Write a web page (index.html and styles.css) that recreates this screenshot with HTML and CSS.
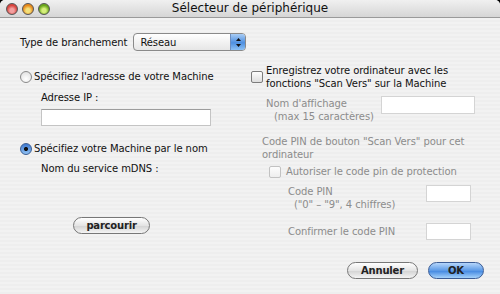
FILE: index.html
```html
<!DOCTYPE html>
<html lang="fr">
<head>
  <meta charset="UTF-8" />
  <title>Sélecteur de périphérique</title>
  <link rel="stylesheet" href="styles.css">
</head>

<body>
  <main class="window">
    <header class="titlebar">
      <div class="lights">
        <span class="light red"></span>
        <span class="light orange"></span>
        <span class="light green"></span>
      </div>
      <h1>Sélecteur de périphérique</h1>
    </header>

    <section class="content">
      <div class="type-row">
        <span>Type de branchement</span>
        <div class="popup">
          <span>Réseau</span>
          <span class="popup-arrows">
            <svg width="7" height="11" viewBox="0 0 7 11">
              <path d="M3.5 1 L6 4 L1 4 Z" fill="#111" />
              <path d="M3.5 10 L6 7 L1 7 Z" fill="#111" />
            </svg>
          </span>
        </div>
      </div>

      <div class="columns">
        <div class="left">
          <label class="option first">
            <span class="radio"></span>
            Spécifiez l'adresse de votre Machine
          </label>
          <div class="sub-label ip-label">Adresse IP :</div>
          <div class="field ip-field"></div>

          <label class="option second">
            <span class="radio checked"></span>
            Spécifiez votre Machine par le nom
          </label>
          <div class="sub-label mdns-label">Nom du service mDNS :</div>

          <button class="aqua browse">parcourir</button>
        </div>

        <div class="right">
          <label class="check-row register">
            <span class="checkbox"></span>
            <span>Enregistrez votre ordinateur avec les<br />fonctions "Scan Vers" sur la Machine</span>
          </label>

          <div class="field-row display-row">
            <span class="muted">Nom d'affichage<br /><span class="indent">(max 15 caractères)</span></span>
            <div class="field display-field"></div>
          </div>

          <p class="muted pin-note">Code PIN de bouton "Scan Vers" pour cet<br />ordinateur</p>

          <label class="check-row protect muted">
            <span class="checkbox disabled"></span>
            Autoriser le code pin de protection
          </label>

          <div class="field-row pin-row">
            <span class="muted">Code PIN<br /><span class="indent-small">("0" – "9", 4 chiffres)</span></span>
            <div class="field pin-field"></div>
          </div>

          <div class="field-row confirm-row">
            <span class="muted">Confirmer le code PIN</span>
            <div class="field pin-field"></div>
          </div>
        </div>
      </div>

      <div class="actions">
        <button class="aqua cancel">Annuler</button>
        <button class="aqua ok">OK</button>
      </div>
    </section>
  </main>
</body>
</html>
```

FILE: styles.css
```css
* {
  box-sizing: border-box;
}

body {
  margin: 0;
  background: #000;
  font-family: "DejaVu Sans", sans-serif;
  font-size: 10px;
  letter-spacing: -0.08px;
  line-height: 13px;
  color: #111;
}

.window {
  width: 500px;
  height: 294px;
  border-radius: 5px 5px 0 0;
  overflow: hidden;
  background: repeating-linear-gradient(to bottom, #eeeeee 0 2px, #f2f2f2 2px 4px);
}

.titlebar {
  position: relative;
  height: 18px;
  background: linear-gradient(#f0f0f0, #d6d6d6);
  border-bottom: 1px solid #9a9a9a;
}

.titlebar h1 {
  margin: 0;
  font-size: 12px;
  font-weight: normal;
  line-height: 17px;
  text-align: center;
  letter-spacing: 0;
}

.lights {
  position: absolute;
  left: 6px;
  top: 3px;
  display: flex;
  gap: 4px;
}

.light {
  width: 12px;
  height: 12px;
  border-radius: 50%;
  border: 1px solid #555;
}

.red {
  background: radial-gradient(circle at 50% 65%, #f3a0a0 0 2px, #d8453f 5px);
}

.orange {
  background: radial-gradient(circle at 50% 65%, #f4e07a 0 2px, #e78a1c 5px);
}

.green {
  background: radial-gradient(circle at 50% 65%, #d6ef7c 0 2px, #6aa71b 5px);
}

.content {
  padding: 15px 16px 0 20px;
}

.type-row {
  display: flex;
  align-items: center;
  gap: 6px;
  height: 18px;
}

.popup {
  display: flex;
  align-items: center;
  justify-content: space-between;
  width: 113px;
  height: 18px;
  padding-left: 6px;
  border: 1px solid #8a8a8a;
  border-radius: 4px;
  background: linear-gradient(#ffffff, #e6e6e6);
  overflow: hidden;
}

.popup-arrows {
  display: flex;
  align-items: center;
  justify-content: center;
  width: 15px;
  height: 100%;
  border-left: 1px solid #6d8ec0;
  background: linear-gradient(#a9cdf6, #4e8fe0 55%, #8cc1f5);
}

.columns {
  display: grid;
  grid-template-columns: 232px 1fr;
}

.option {
  display: flex;
  align-items: center;
  gap: 2px;
  height: 13px;
}

.option.first {
  margin-top: 19px;
}

.option.second {
  margin-top: 16px;
}

.radio {
  width: 12px;
  height: 12px;
  border-radius: 50%;
  border: 1px solid #8a8a8a;
  background: radial-gradient(circle at 50% 70%, #ffffff, #dcdcdc);
}

.radio.checked {
  border-color: #3c5e93;
  background: radial-gradient(circle, #111 0 1.8px, transparent 2.3px),
    linear-gradient(#3d78cf, #8fc1f4);
}

.sub-label {
  padding-left: 21px;
}

.ip-label {
  margin-top: 8px;
}

.mdns-label {
  margin-top: 7px;
}

.field {
  height: 17px;
  background: #fff;
  border: 1px solid #c4c4c4;
  border-top-color: #9c9c9c;
}

.ip-field {
  width: 170px;
  margin: 5px 0 0 21px;
}

.aqua {
  display: block;
  height: 17px;
  padding: 0;
  border: 1px solid #777;
  border-radius: 9px;
  background: linear-gradient(#ffffff, #e4e4e4 50%, #d2d2d2 51%, #f4f4f4);
  font-family: inherit;
  font-size: 10px;
  font-weight: bold;
  letter-spacing: -0.2px;
  color: #222;
}

.browse {
  width: 77px;
  margin: 42px 0 0 53px;
}

.right {
  padding-top: 13px;
}

.check-row {
  display: flex;
  align-items: center;
  gap: 3px;
}

.checkbox {
  flex: none;
  width: 12px;
  height: 12px;
  border: 1px solid #7c7c7c;
  border-radius: 2px;
  background: linear-gradient(#fdfdfd, #dedede);
}

.checkbox.disabled {
  border-color: #c2c2c2;
  background: linear-gradient(#fdfdfd, #eeeeee);
}

.register {
  margin-left: -1px;
}

.muted {
  color: #8c8c8c;
}

.field-row {
  display: flex;
  align-items: flex-start;
}

.display-row {
  margin: 6px 0 0 14px;
}

.display-row > span {
  width: 115px;
  padding-top: 1px;
}

.indent {
  padding-left: 8px;
}

.display-field {
  width: 94px;
  height: 18px;
  border-color: #d4d4d4;
}

.pin-note {
  margin: 12px 0 0 10px;
}

.protect {
  margin: 4px 0 0 17px;
  gap: 5px;
}

.pin-row {
  margin: 7px 0 0 36px;
}

.pin-row > span,
.confirm-row > span {
  width: 138px;
}

.indent-small {
  padding-left: 6px;
}

.confirm-row {
  margin: 12px 0 0 36px;
  align-items: center;
}

.pin-field {
  width: 45px;
  height: 17px;
  border-color: #d4d4d4;
}

.actions {
  display: flex;
  justify-content: flex-end;
  gap: 10px;
  margin-top: 22px;
}

.cancel {
  width: 71px;
}

.ok {
  width: 56px;
  border-color: #3b5c95;
  background: linear-gradient(#b5d6fb, #5c9ae6 50%, #3f85e0 51%, #a5d2fb);
}
```
